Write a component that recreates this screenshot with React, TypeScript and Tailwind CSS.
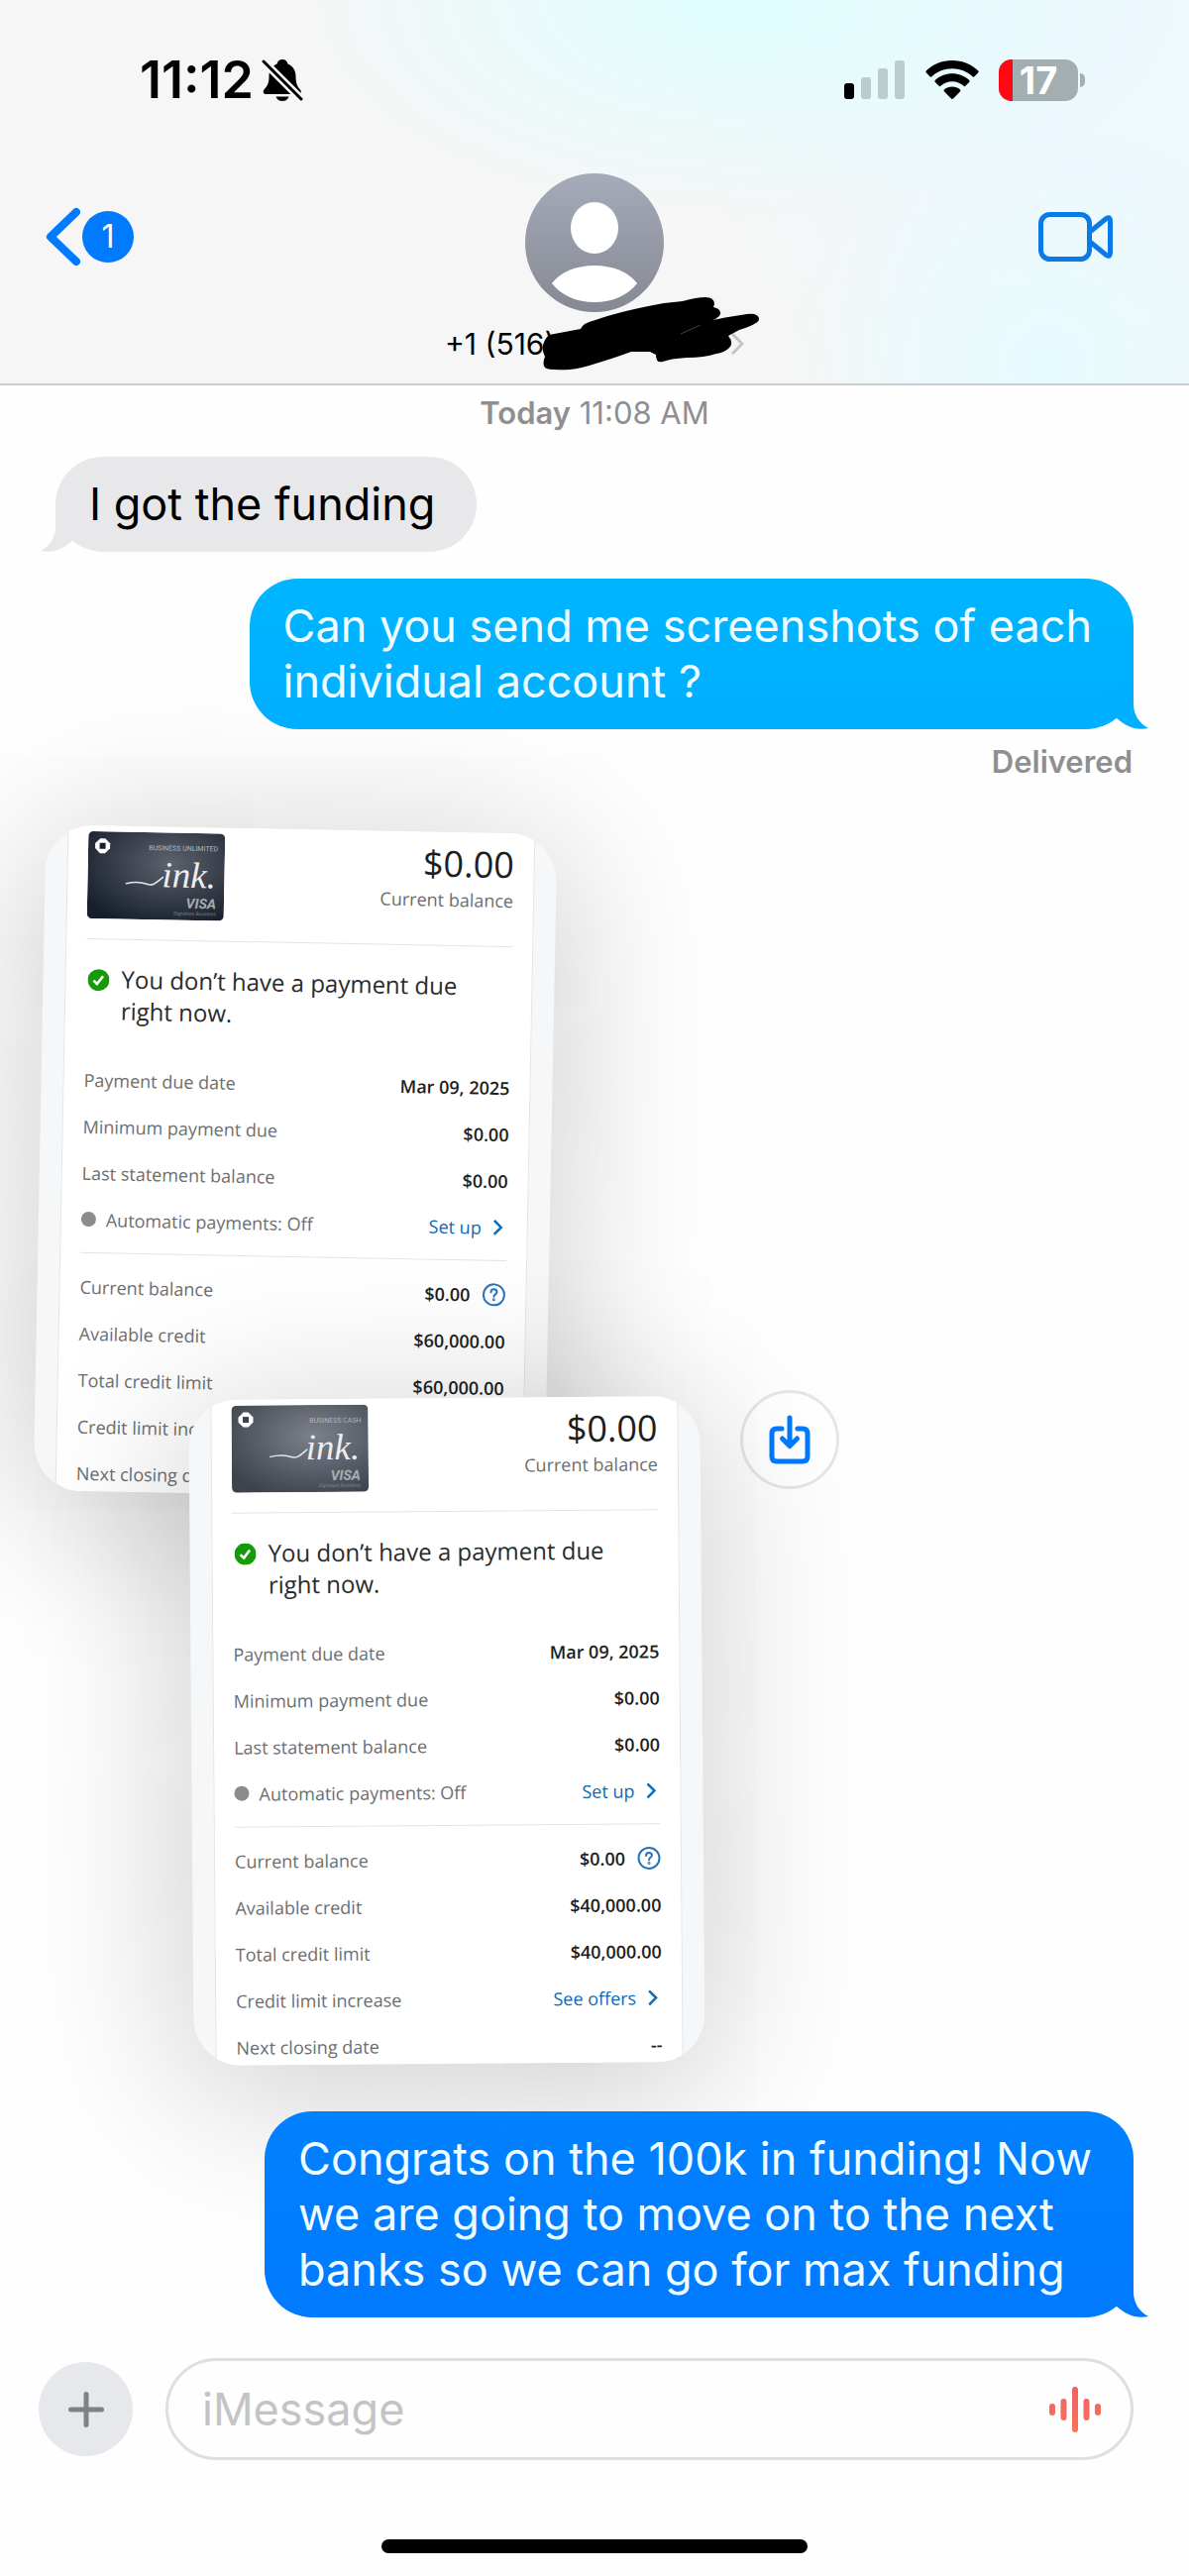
import React from 'react';

interface AccountRow {
  label: string;
  value?: string;
  link?: string;
  help?: boolean;
  dot?: boolean;
}

interface Account {
  id: string;
  cardName: string;
  from: string;
  to: string;
  limit: string;
}

const accounts: Account[] = [
  { id: 'unlimited', cardName: 'BUSINESS UNLIMITED', from: '#161f2b', to: '#5d626d', limit: '$60,000.00' },
  { id: 'cash', cardName: 'BUSINESS CASH', from: '#3c434d', to: '#7c8089', limit: '$40,000.00' },
];

const paymentRows: AccountRow[] = [
  { label: 'Payment due date', value: 'Mar 09, 2025' },
  { label: 'Minimum payment due', value: '$0.00' },
  { label: 'Last statement balance', value: '$0.00' },
  { label: 'Automatic payments: Off', link: 'Set up', dot: true },
];

const creditRows = (limit: string): AccountRow[] => [
  { label: 'Current balance', value: '$0.00', help: true },
  { label: 'Available credit', value: limit },
  { label: 'Total credit limit', value: limit },
  { label: 'Credit limit increase', link: 'See offers' },
  { label: 'Next closing date', value: '--' },
];

const StatusBar = () => (
  <div className="flex items-center justify-between pt-[50px] pl-[141px] pr-[105px]">
    <div className="flex items-center gap-2">
      <span className="text-[52px] leading-[62px] font-semibold">11:12</span>
      <svg width="42" height="44" viewBox="0 0 42 44" fill="none">
        <path
          d="M21 1c3 0 5 2 5.500 4.500C32 8 34.500 12.500 34.500 18c0 7 1.500 10 4.500 13.500 1.600 2 .8 4.500-2 4.500H4.500c-2.800 0-3.500-2.500-2-4.500C6 27.500 7.500 25 7.500 18c0-5.500 2.500-10 8-12.500C16 3 18 1 21 1z"
          fill="#000"
        />
        <path d="M14.500 38.500h13c-1 3-3.500 4.500-6.500 4.500s-5.500-1.500-6.500-4.500z" fill="#000" />
        <path d="M1 2l40 40" stroke="#f6f6f6" strokeWidth="8" />
        <path d="M2 3l38 38" stroke="#000" strokeWidth="3" strokeLinecap="round" />
      </svg>
    </div>
    <div className="flex items-center">
      <svg width="62" height="40" viewBox="0 0 62 40">
        <rect x="0" y="23" width="10" height="16" rx="3" fill="#000" />
        <rect x="17" y="17" width="10" height="22" rx="3" fill="#b9cdd0" />
        <rect x="34" y="8" width="10" height="31" rx="3" fill="#b9cdd0" />
        <rect x="51" y="0" width="10" height="39" rx="3" fill="#b9cdd0" />
      </svg>
      <svg className="ml-5" width="54" height="40" viewBox="0 0 54 40" fill="#000">
        <path d="M27 0c10.400 0 19.600 3.900 26 10.200.8.8.8 1.700.1 2.400l-3.400 3.500c-.7.700-1.600.7-2.400 0C42 11 34.900 8.200 27 8.200S12 11 6.700 16.100c-.8.7-1.700.7-2.400 0L.9 12.600c-.7-.7-.7-1.600.1-2.400C7.400 3.900 16.600 0 27 0z" />
        <path d="M27 13.200c6.700 0 12.600 2.400 17 6.500.8.8.8 1.600.1 2.300L40.600 25.600c-.7.7-1.500.7-2.300 0-3-2.700-6.900-4.300-11.300-4.300s-8.300 1.600-11.300 4.300c-.8.7-1.600.7-2.300 0L9.900 22c-.7-.7-.7-1.500.1-2.300 4.400-4.100 10.300-6.500 17-6.500z" />
        <path d="M27 26.400c3 0 5.700 1 7.800 2.800.8.700.8 1.500.1 2.200l-6.600 6.900c-.8.8-1.800.8-2.600 0l-6.600-6.900c-.7-.7-.7-1.500.1-2.200 2.100-1.800 4.800-2.800 7.800-2.800z" />
      </svg>
      <div className="ml-5 flex h-[42px] w-20 items-center rounded-[13px] bg-[#a3aeb0]">
        <div className="h-full w-3.5 rounded-l-[13px] bg-[#ff0a14]" />
        <span className="w-[52px] text-center text-[38px] leading-[48px] font-bold text-white">17</span>
      </div>
      <div className="ml-0.5 h-3.5 w-[5px] rounded-r-full bg-[#a3aeb0]" />
    </div>
  </div>
);

const ContactHeader = () => (
  <div className="mt-[63px] grid grid-cols-3 items-start pl-[45px] pr-[76px]">
    <button type="button" aria-label="Back" className="mt-[34px] flex items-center gap-0.5">
      <svg width="36" height="60" viewBox="0 0 36 60" fill="none" stroke="#007aff" strokeWidth="8" strokeLinecap="round" strokeLinejoin="round">
        <path d="M32 5L6 30l26 25" />
      </svg>
      <span className="flex size-[52px] items-center justify-center rounded-full bg-[#007aff] text-[32px] leading-[52px] text-white">1</span>
    </button>

    <div className="flex flex-col items-center justify-self-center pl-[31px]">
      <svg width="140" height="140" viewBox="0 0 140 140">
        <defs>
          <linearGradient id="avatar" x1="0" y1="0" x2="0" y2="1">
            <stop offset="0" stopColor="#a5abb9" />
            <stop offset="1" stopColor="#868993" />
          </linearGradient>
        </defs>
        <circle cx="70" cy="70" r="70" fill="url(#avatar)" />
        <ellipse cx="70" cy="55" rx="24" ry="26" fill="#fff" />
        <path d="M27 111c9-12 25-18 43-18s34 6 43 18c-9 12-25 19-43 19s-34-7-43-19z" fill="#fff" />
      </svg>
      <button type="button" className="relative mt-3 flex w-[302px] items-center justify-between">
        <span className="text-[30px] leading-[40px] whitespace-nowrap">+1 (516)</span>
        <svg width="13" height="22" viewBox="0 0 13 22" fill="none" stroke="#c4c4c8" strokeWidth="3">
          <path d="M1 1l10 10L1 21" />
        </svg>
        {/* Marker strokes over the rest of the number */}
        <svg className="absolute -top-8 left-[92px]" width="230" height="85" viewBox="540 295 230 85">
          <path
            d="M553 338L585 332Q587 326 600 323Q625 314 669 306L688 304Q702 300 711 300Q720 300 720 307L719 310Q727 312 726 317Q725 322 711 325Q730 320 753 317Q765 316 765 322Q765 327 745 333L734 339Q740 346 735 351Q730 356 722 357Q710 361 692 361Q675 362 668 365Q661 367 661 358L655 355L636 355Q620 361 600 367Q585 372 574 373Q552 374 549 371Q546 367 549 360Q543 348 553 338Z"
            fill="#000"
          />
          <path d="M686 337l20-9" stroke="#555" strokeWidth="0.8" />
        </svg>
      </button>
    </div>

    <button type="button" aria-label="Video call" className="mt-[38px] justify-self-end">
      <svg width="77" height="52" viewBox="0 0 77 52" fill="none" stroke="#0a7be6" strokeWidth="5" strokeLinejoin="round">
        <rect x="3.500" y="3.500" width="49" height="45" rx="9" />
        <path d="M53 21L69.500 7.500Q73.500 5 73.500 10V42Q73.500 47 69.500 44.500L53 31" />
      </svg>
    </button>
  </div>
);

interface BubbleProps {
  tone: 'received' | 'sky' | 'blue';
  children: React.ReactNode;
}

const bubbleTones = {
  received: 'self-start ml-[56px] bg-[#e8e8ea] text-[#e8e8ea]',
  sky: 'self-end mr-[56px] bg-linear-to-b from-[#00b5ff] to-[#00afff] text-[#00afff]',
  blue: 'self-end mr-[56px] bg-linear-to-b from-[#0081ff] to-[#007aff] text-[#007aff]',
};

const Bubble: React.FC<BubbleProps> = ({ tone, children }) => {
  const received = tone === 'received';
  return (
    <div className={`relative z-20 rounded-[48px] py-5 pl-[34px] pr-[42px] ${bubbleTones[tone]}`}>
      <p className={`text-[45px] leading-[56px] ${received ? 'text-black' : 'text-[#f0fdff]'}`}>{children}</p>
      <svg
        className={`absolute bottom-0 ${received ? '-left-[15px] -scale-x-100' : '-right-[15px]'}`}
        width="48"
        height="48"
        viewBox="0 0 48 48"
        fill="currentColor"
      >
        <path d="M33 0V22C33 34 39 42 48 47C35 50 24 44 16 37L0 10Z" />
      </svg>
    </div>
  );
};

const InkCard: React.FC<{ account: Account }> = ({ account }) => (
  <svg className="rounded-[5px]" width="138" height="88" viewBox="0 0 138 88" fontFamily="Roboto, sans-serif">
    <defs>
      <radialGradient id={account.id} cx="0.6" cy="0.35" r="0.75">
        <stop offset="0" stopColor={account.to} />
        <stop offset="1" stopColor={account.from} />
      </radialGradient>
    </defs>
    <rect width="138" height="88" fill={`url(#${account.id})`} />
    <path d="M12 9h5l5 5v5l-5 5h-5l-5-5v-5z" fill="#fff" transform="translate(0 -2)" />
    <rect x="11.500" y="11.500" width="6" height="6" fill={account.from} />
    <text x="131" y="18" textAnchor="end" fontSize="7" fill="#b4b8be">{account.cardName}</text>
    <path d="M39 52c8-2 14-2 20 0s8 1 17-7" fill="none" stroke="#e3e6ea" strokeWidth="1.500" strokeLinecap="round" />
    <text x="75" y="55" fontFamily="Liberation Serif, serif" fontStyle="italic" fontSize="37" fill="#eceef1">ink.</text>
    <text x="130" y="76" textAnchor="end" fontSize="14" fontWeight="700" fontStyle="italic" fill="#a9adb3">VISA</text>
    <text x="130" y="83" textAnchor="end" fontSize="5" fill="#82868e">Signature Business</text>
  </svg>
);

const Row: React.FC<{ row: AccountRow }> = ({ row }) => (
  <div className="flex h-[47px] items-center justify-between">
    <dt className="flex items-center gap-2.5 text-[#6d6e70]">
      {row.dot && <span className="size-[15px] rounded-full bg-[#8b8c8c]" />}
      {row.label}
    </dt>
    <dd className="flex items-center font-semibold text-[#1d1e20]">
      {row.value}
      {row.link && (
        <a href="#" className="flex items-center gap-3 pr-1 font-normal text-[#0b6cb8]">
          {row.link}
          <svg width="10" height="16" viewBox="0 0 10 16" fill="none" stroke="currentColor" strokeWidth="2.500">
            <path d="M1 1l7 7-7 7" />
          </svg>
        </a>
      )}
      {row.help && (
        <button type="button" aria-label="About current balance" className="ml-3 text-[#2a73bb]">
          <svg width="24" height="24" viewBox="0 0 24 24" fill="none" stroke="currentColor" strokeWidth="2" strokeLinecap="round">
            <circle cx="12" cy="12" r="10.500" />
            <path d="M9 9.500c0-1.800 1.300-3 3-3s3 1.100 3 2.700c0 2.200-3 2.300-3 4.600" />
            <circle cx="12" cy="17" r="0.500" />
          </svg>
        </button>
      )}
    </dd>
  </div>
);

const AccountShot: React.FC<{ account: Account; className: string }> = ({ account, className }) => (
  <article
    className={`h-[672px] w-[516px] shrink-0 overflow-hidden rounded-[48px] bg-[#f5f7f9] px-[22px] font-['Open_Sans',sans-serif] text-[18px] leading-6 shadow-[0_20px_160px_8px_rgba(0,0,0,0.2)] ${className}`}
  >
    <div className="h-full border-x border-[#e3e5e7] bg-white px-5">
      <div className="flex items-start justify-between pt-1.5">
        <InkCard account={account} />
        <div className="pt-1.5 text-right">
          <p className="text-[36px] leading-10 text-[#1d1e20]">$0.00</p>
          <p className="mt-1 text-[#6d6e70]">Current balance</p>
        </div>
      </div>
      <hr className="mt-5 border-[#e2e3e4]" />
      <div className="mt-6 flex items-start gap-3 pl-0.5">
        <svg className="mt-1.5 shrink-0" width="22" height="22" viewBox="0 0 22 22" fill="none">
          <circle cx="11" cy="11" r="11" fill="#159a09" />
          <path d="M6 11.500l3.500 3.500L15.500 7" stroke="#fff" strokeWidth="2.600" />
        </svg>
        <p className="w-[350px] text-[24px] leading-8 text-[#2a2b2d]">You don’t have a payment due right now.</p>
      </div>
      <dl className="mt-[30px]">
        {paymentRows.map((row) => <Row key={row.label} row={row} />)}
      </dl>
      <hr className="my-2.5 border-[#e2e3e4]" />
      <dl>
        {creditRows(account.limit).map((row) => <Row key={row.label} row={row} />)}
      </dl>
    </div>
  </article>
);

const Composer = () => (
  <form className="relative z-20 mt-[41px] flex items-center pl-[39px] pr-[56px]">
    <button type="button" aria-label="Add attachment" className="flex size-[95px] shrink-0 items-center justify-center rounded-full bg-[#e7e8ec]">
      <svg width="38" height="38" viewBox="0 0 38 38" stroke="#808184" strokeWidth="5" strokeLinecap="round">
        <path d="M19 3.500v31M3.500 19h31" />
      </svg>
    </button>
    <div className="ml-[33px] flex h-[103px] flex-1 items-center rounded-full border-[3px] border-[#dfdfdf] pl-[34px] pr-[30px]">
      <input
        type="text"
        aria-label="iMessage"
        placeholder="iMessage"
        className="min-w-0 flex-1 bg-transparent text-[45px] leading-[56px] outline-none placeholder:text-[#c4c4c6]"
      />
      <button type="button" aria-label="Record audio">
        <svg width="52" height="46" viewBox="0 0 52 46" fill="url(#wave)">
          <defs>
            <linearGradient id="wave" gradientUnits="userSpaceOnUse" x1="0" y1="0" x2="0" y2="46">
              <stop offset="0" stopColor="#f0606a" />
              <stop offset="1" stopColor="#f67555" />
            </linearGradient>
          </defs>
          <rect x="0" y="17" width="6" height="12" rx="3" />
          <rect x="11.500" y="12" width="6" height="22" rx="3" />
          <rect x="23" y="0" width="6" height="46" rx="3" />
          <rect x="34.500" y="12" width="6" height="22" rx="3" />
          <rect x="46" y="17" width="6" height="12" rx="3" />
        </svg>
      </button>
    </div>
  </form>
);

export default function App() {
  return (
    <div className="flex flex-col overflow-hidden bg-[#fefefe] font-['Inter',sans-serif] text-black">
      <header className="relative z-20 border-b-2 border-[#cbcccf] bg-[#f6f6f6] bg-[radial-gradient(ellipse_440px_220px_at_62%_0%,#dfffff_0%,transparent_100%),radial-gradient(ellipse_260px_240px_at_88%_95%,#e6fcff_0%,transparent_100%),radial-gradient(ellipse_440px_440px_at_95%_15%,#eef8fd_30%,transparent_100%)] pb-5">
        <StatusBar />
        <ContactHeader />
      </header>

      <main className="flex flex-col">
        <p className="mt-2.5 text-center text-[31px] leading-9 text-[#8f8f92]">
          <span className="font-semibold">Today</span> 11:08 AM
        </p>
        <div className="mt-[26px] flex flex-col gap-[27px]">
          <Bubble tone="received">I got the funding</Bubble>
          <Bubble tone="sky">
            Can you send me screenshots of each
            <br />
            individual account ?
          </Bubble>
        </div>
        <p className="mt-[15px] mr-[57px] text-right text-[31px] leading-9 font-semibold text-[#8f8f92]">Delivered</p>

        <div className="mt-[50px] flex flex-col">
          <AccountShot account={accounts[0]} className="ml-10 rotate-[1.1deg]" />
          <div className="relative z-10 -mt-[106px] ml-[193px] flex items-start gap-[38px]">
            <AccountShot account={accounts[1]} className="mt-2 -rotate-[0.45deg]" />
            <button type="button" aria-label="Save" className="flex size-[100px] items-center justify-center rounded-full border-[3px] border-[#e6e6e6] bg-white">
              <svg width="42" height="50" viewBox="0 0 42 50" fill="none" stroke="#007aff" strokeWidth="5" strokeLinecap="round" strokeLinejoin="round">
                <path d="M13 14H8q-5 0-5 5v23q0 5 5 5h26q5 0 5-5V19q0-5-5-5h-5" />
                <path d="M21 3v28M13.500 24l7.500 7.500 7.500-7.500" />
              </svg>
            </button>
          </div>
        </div>

        <div className="mt-12 flex flex-col">
          <Bubble tone="blue">
            Congrats on the 100k in funding! Now
            <br />
            we are going to move on to the next
            <br />
            banks so we can go for max funding
          </Bubble>
        </div>
      </main>

      <Composer />
      <div className="mt-20 mb-[23px] h-3.5 w-[430px] self-center rounded-full bg-black" />
    </div>
  );
}
